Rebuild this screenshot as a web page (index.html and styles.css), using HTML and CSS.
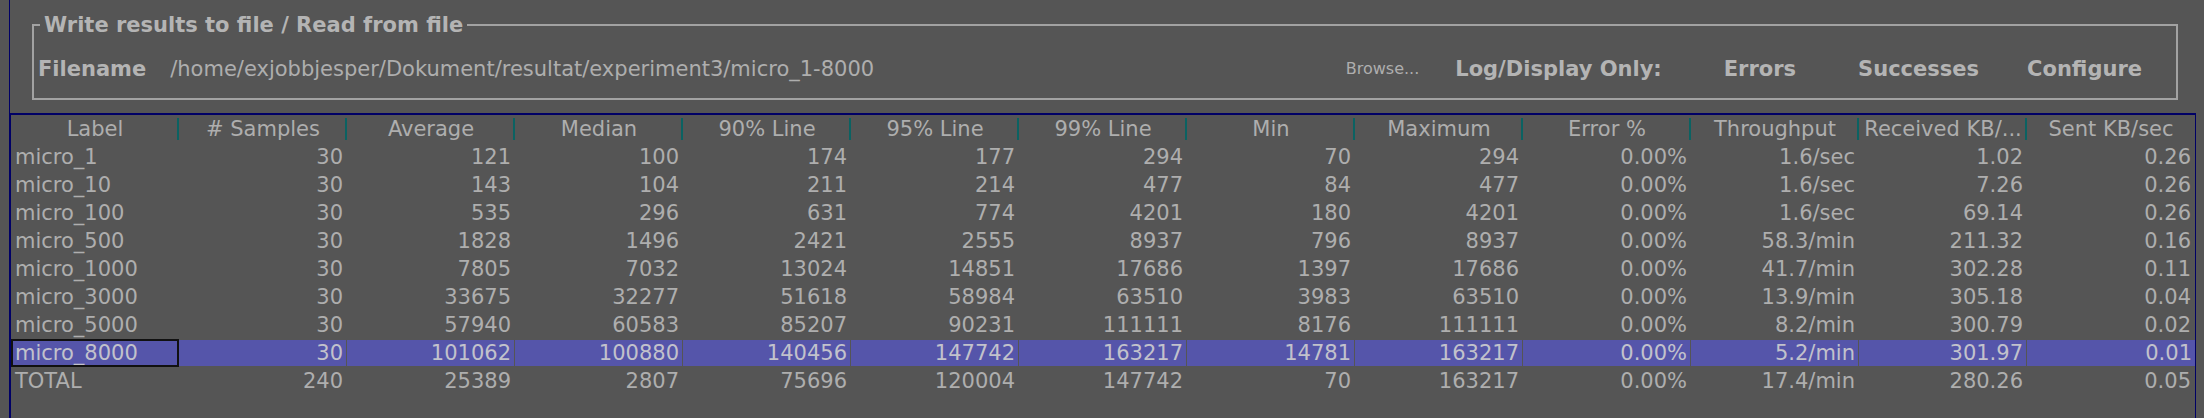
FILE: index.html
```html
<!DOCTYPE html>
<html>
<head>
<meta charset="utf-8">
<link rel="stylesheet" href="styles.css">
</head>
<body>
<div class="window">
  <div class="panel">
    <fieldset class="file-box">
      <legend>Write results to file / Read from file</legend>
      <div class="file-row">
        <span class="bold label-filename">Filename</span>
        <span class="path">/home/exjobbjesper/Dokument/resultat/experiment3/micro_1-8000</span>
        <span class="browse">Browse...</span>
        <span class="bold log-only">Log/Display Only:</span>
        <span class="bold check">Errors</span>
        <span class="bold check">Successes</span>
        <span class="bold configure">Configure</span>
      </div>
    </fieldset>
    <div class="table-pane">
      <div class="row head">
        <div class="hc">Label</div><div class="hc"># Samples</div><div class="hc">Average</div><div class="hc">Median</div><div class="hc">90% Line</div><div class="hc">95% Line</div><div class="hc">99% Line</div><div class="hc">Min</div><div class="hc">Maximum</div><div class="hc">Error %</div><div class="hc">Throughput</div><div class="hc">Received KB/...</div><div class="hc last">Sent KB/sec</div>
      </div>
      <div class="row"><div class="c lbl">micro_1</div><div class="c">30</div><div class="c">121</div><div class="c">100</div><div class="c">174</div><div class="c">177</div><div class="c">294</div><div class="c">70</div><div class="c">294</div><div class="c">0.00%</div><div class="c">1.6/sec</div><div class="c">1.02</div><div class="c">0.26</div></div>
      <div class="row"><div class="c lbl">micro_10</div><div class="c">30</div><div class="c">143</div><div class="c">104</div><div class="c">211</div><div class="c">214</div><div class="c">477</div><div class="c">84</div><div class="c">477</div><div class="c">0.00%</div><div class="c">1.6/sec</div><div class="c">7.26</div><div class="c">0.26</div></div>
      <div class="row"><div class="c lbl">micro_100</div><div class="c">30</div><div class="c">535</div><div class="c">296</div><div class="c">631</div><div class="c">774</div><div class="c">4201</div><div class="c">180</div><div class="c">4201</div><div class="c">0.00%</div><div class="c">1.6/sec</div><div class="c">69.14</div><div class="c">0.26</div></div>
      <div class="row"><div class="c lbl">micro_500</div><div class="c">30</div><div class="c">1828</div><div class="c">1496</div><div class="c">2421</div><div class="c">2555</div><div class="c">8937</div><div class="c">796</div><div class="c">8937</div><div class="c">0.00%</div><div class="c">58.3/min</div><div class="c">211.32</div><div class="c">0.16</div></div>
      <div class="row"><div class="c lbl">micro_1000</div><div class="c">30</div><div class="c">7805</div><div class="c">7032</div><div class="c">13024</div><div class="c">14851</div><div class="c">17686</div><div class="c">1397</div><div class="c">17686</div><div class="c">0.00%</div><div class="c">41.7/min</div><div class="c">302.28</div><div class="c">0.11</div></div>
      <div class="row"><div class="c lbl">micro_3000</div><div class="c">30</div><div class="c">33675</div><div class="c">32277</div><div class="c">51618</div><div class="c">58984</div><div class="c">63510</div><div class="c">3983</div><div class="c">63510</div><div class="c">0.00%</div><div class="c">13.9/min</div><div class="c">305.18</div><div class="c">0.04</div></div>
      <div class="row"><div class="c lbl">micro_5000</div><div class="c">30</div><div class="c">57940</div><div class="c">60583</div><div class="c">85207</div><div class="c">90231</div><div class="c">111111</div><div class="c">8176</div><div class="c">111111</div><div class="c">0.00%</div><div class="c">8.2/min</div><div class="c">300.79</div><div class="c">0.02</div></div>
      <div class="row selected"><div class="c lbl focus">micro_8000</div><div class="c">30</div><div class="c">101062</div><div class="c">100880</div><div class="c">140456</div><div class="c">147742</div><div class="c">163217</div><div class="c">14781</div><div class="c">163217</div><div class="c">0.00%</div><div class="c">5.2/min</div><div class="c">301.97</div><div class="c">0.01</div></div>
      <div class="row"><div class="c lbl">TOTAL</div><div class="c">240</div><div class="c">25389</div><div class="c">2807</div><div class="c">75696</div><div class="c">120004</div><div class="c">147742</div><div class="c">70</div><div class="c">163217</div><div class="c">0.00%</div><div class="c">17.4/min</div><div class="c">280.26</div><div class="c">0.05</div></div>
    </div>
  </div>
</div>
</body>
</html>
```
FILE: styles.css
```css
html, body {
  margin: 0;
  padding: 0;
  background: #555555;
}
body {
  font-family: "DejaVu Sans", "Noto Sans", sans-serif;
  font-size: 21px;
  color: #aeaeae;
}
.window {
  width: 2204px;
  height: 418px;
  padding-left: 9px;
  box-sizing: border-box;
  overflow: hidden;
}
.panel {
  height: 418px;
  border-left: 1px solid #000066;
  padding-top: 13px;
  box-sizing: border-box;
  display: flex;
  flex-direction: column;
}
.file-box {
  margin: 0 0 0 22px;
  padding: 20px 0 17px 0;
  width: 2146px;
  box-sizing: border-box;
  min-inline-size: 0;
  border: 2px solid #a2a2a2;
}
.file-box legend {
  margin-left: 6px;
  padding: 0 4px;
  font-weight: bold;
  line-height: 24px;
  color: #b4b4b4;
}
.bold {
  font-weight: bold;
  color: #b4b4b4;
}
.file-row {
  display: flex;
  align-items: center;
  height: 24px;
  line-height: 24px;
  white-space: nowrap;
}
.label-filename {
  margin-left: 4px;
}
.path {
  margin-left: 24px;
  flex: 1;
}
.browse {
  font-size: 16px;
}
.log-only {
  margin-left: 36px;
}
.check {
  margin-left: 62px;
}
.configure {
  margin-left: 48px;
  margin-right: 34px;
}
.table-pane {
  margin-top: 13px;
  width: 2186px;
  flex: 1;
  box-sizing: border-box;
  border-top: 2px solid #000066;
  border-left: 1px solid #000066;
  border-right: 1px solid #000066;
}
.row {
  display: grid;
  grid-template-columns: repeat(13, 168px);
  height: 28px;
  line-height: 28px;
  white-space: nowrap;
}
.hc {
  text-align: center;
  overflow: hidden;
  background: linear-gradient(#0b6262, #0b6262) no-repeat right 0 center / 2px 22px;
}
.hc.last {
  background: none;
}
.c {
  text-align: right;
  padding: 0 4px;
  overflow: hidden;
}
.c.lbl {
  text-align: left;
}
.selected .c {
  background: #5555aa;
  color: #c2c2cc;
  border-right: 1px solid #555555;
  border-top: 1px solid #555555;
  border-bottom: 1px solid #555555;
  line-height: 26px;
  padding-right: 3px;
}
.selected .c:last-child {
  border-right: none;
}
.selected .c.focus {
  outline: 2px solid #111111;
  outline-offset: -2px;
}
```
